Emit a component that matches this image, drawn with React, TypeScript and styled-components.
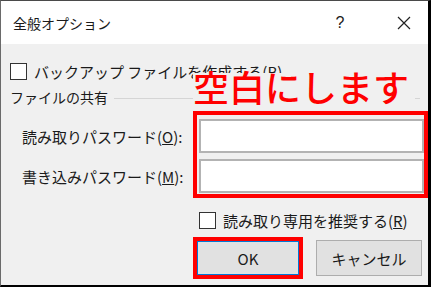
import styled, { createGlobalStyle } from 'styled-components';

const Global = createGlobalStyle`
  html, body {
    margin: 0;
    padding: 0;
    background: #ffffff;
  }
  body {
    font-family: "Noto Sans CJK JP", "Noto Sans", sans-serif;
    color: #1a1a1a;
  }
`;

const Frame = styled.div`
  width: 431px;
  height: 287px;
  box-sizing: border-box;
  border-top: 1px solid #4a4a4a;
  border-left: 1px solid #6a6a6a;
  border-right: 3px solid #000;
  border-bottom: 2px solid #000;
  display: flex;
  flex-direction: column;
  overflow: hidden;
`;

const TitleBar = styled.div`
  height: 43px;
  flex-shrink: 0;
  background: #fff;
  display: flex;
  align-items: center;
  padding-left: 12px;
  font-size: 14px;
`;

const Title = styled.span`
  flex: 1;
  line-height: 1;
`;

const HelpButton = styled.span`
  width: 14px;
  text-align: center;
  font-size: 16px;
  margin-right: 50px;
  font-family: "Liberation Sans", sans-serif;
`;

const CloseButton = styled.span`
  width: 14px;
  height: 14px;
  margin-right: 17px;
  display: flex;
`;

const Body = styled.div`
  position: relative;
  flex: 1;
  background: #f0f0f0;
  padding: 19px 0 0 9px;
  font-size: 15px;
  display: flex;
  flex-direction: column;
`;

const CheckRow = styled.label<{ $indent?: number; $top?: number }>`
  display: flex;
  align-items: center;
  height: 17px;
  gap: 7px;
  margin-left: ${p => p.$indent ?? 0}px;
  margin-top: ${p => p.$top ?? 0}px;
  line-height: 1;
  white-space: nowrap;
`;

const CheckBox = styled.span`
  width: 15px;
  height: 15px;
  flex-shrink: 0;
  border: 1px solid #333;
  background: #fff;
`;

const GroupHead = styled.div`
  display: flex;
  align-items: center;
  gap: 6px;
  margin-top: 7px;
  height: 20px;
  font-size: 14px;
  padding-right: 8px;

  &::after {
    content: '';
    flex: 1;
    height: 1px;
    background: #d5d5d5;
    margin-top: 2px;
  }
`;

const PasswordBlock = styled.div`
  display: flex;
  margin-top: 4px;
`;

const LabelColumn = styled.div`
  flex: 1;
  padding: 8px 0 0 12px;
  display: flex;
  flex-direction: column;
  gap: 6px;
`;

const PasswordLabel = styled.div`
  height: 34px;
  display: flex;
  align-items: center;
  white-space: nowrap;
`;

const RedFrame = styled.div`
  width: 235px;
  box-sizing: border-box;
  border: 4px solid #ff0000;
  padding: 4px 0 1px 2px;
  display: flex;
  flex-direction: column;
  gap: 6px;
`;

const PasswordInput = styled.div`
  height: 34px;
  box-sizing: border-box;
  border: 2px solid #b3b3b3;
  background: #fff;
`;

const ButtonRow = styled.div`
  display: flex;
  align-items: center;
  margin-top: 8px;
  margin-left: 183px;
  gap: 13px;
`;

const OkHighlight = styled.div`
  border: 4px solid #ff0000;
  display: flex;
`;

const DialogButton = styled.div<{ $primary?: boolean; $w: number; $h: number }>`
  width: ${p => p.$w}px;
  height: ${p => p.$h}px;
  box-sizing: border-box;
  background: #e1e1e1;
  border: 1px solid ${p => (p.$primary ? '#0078d7' : '#adadad')};
  display: flex;
  align-items: center;
  justify-content: center;
  font-size: 15px;
  line-height: 1;
`;

const Annotation = styled.div`
  position: absolute;
  left: 192px;
  top: 24px;
  padding-right: 6px;
  background: linear-gradient(to bottom, transparent 5px, #f0f0f0 5px);
  color: #ff0000;
  font-size: 36px;
  font-weight: 500;
  line-height: 36px;
  white-space: nowrap;
`;

export default function App() {
  return (
    <>
      <Global />
      <Frame>
        <TitleBar>
          <Title>全般オプション</Title>
          <HelpButton>?</HelpButton>
          <CloseButton>
            <svg width="14" height="14" viewBox="0 0 14 14">
              <path d="M1 1 L13 13 M13 1 L1 13" stroke="#222" strokeWidth="1.2" />
            </svg>
          </CloseButton>
        </TitleBar>

        <Body>
          <CheckRow>
            <CheckBox />
            <span>バックアップ ファイルを作成する(<u>B</u>)</span>
          </CheckRow>

          <GroupHead>ファイルの共有</GroupHead>

          <PasswordBlock>
            <LabelColumn>
              <PasswordLabel>読み取りパスワード(<u>O</u>):</PasswordLabel>
              <PasswordLabel>書き込みパスワード(<u>M</u>):</PasswordLabel>
            </LabelColumn>
            <RedFrame>
              <PasswordInput />
              <PasswordInput />
            </RedFrame>
          </PasswordBlock>

          <CheckRow $indent={189} $top={14}>
            <CheckBox />
            <span>読み取り専用を推奨する(<u>R</u>)</span>
          </CheckRow>

          <ButtonRow>
            <OkHighlight>
              <DialogButton $primary $w={102} $h={34}>OK</DialogButton>
            </OkHighlight>
            <DialogButton $w={106} $h={36}>キャンセル</DialogButton>
          </ButtonRow>

          <Annotation>空白にします</Annotation>
        </Body>
      </Frame>
    </>
  );
}
